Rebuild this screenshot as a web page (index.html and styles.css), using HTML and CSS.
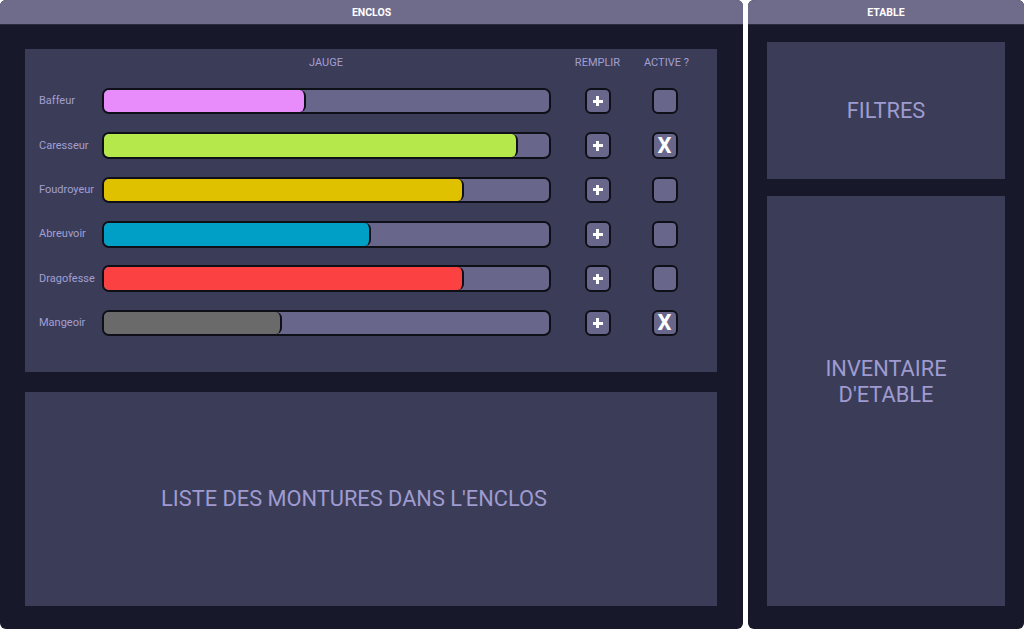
FILE: index.html
```html
<!DOCTYPE html>
<html lang="fr">
<head>
<meta charset="utf-8">
<title>Enclos</title>
<link rel="stylesheet" href="styles.css">
</head>
<body>
<div class="app">
  <section class="panel enclos">
    <header class="panel-head">ENCLOS</header>
    <div class="panel-body enclos-body">
      <div class="box gauges">
        <div class="grid">
          <div class="col-h"></div>
          <div class="col-h">JAUGE</div>
          <div class="col-h">REMPLIR</div>
          <div class="col-h">ACTIVE ?</div>

          <div class="label">Baffeur</div>
          <div class="track"><div class="fill pink" style="width:45.5%"></div></div>
          <div class="cell"><button class="btn"><span class="plus"></span></button></div>
          <div class="cell"><button class="btn"></button></div>

          <div class="label">Caresseur</div>
          <div class="track"><div class="fill lime" style="width:93%"></div></div>
          <div class="cell"><button class="btn"><span class="plus"></span></button></div>
          <div class="cell"><button class="btn x">X</button></div>

          <div class="label">Foudroyeur</div>
          <div class="track"><div class="fill yellow" style="width:81%"></div></div>
          <div class="cell"><button class="btn"><span class="plus"></span></button></div>
          <div class="cell"><button class="btn"></button></div>

          <div class="label">Abreuvoir</div>
          <div class="track"><div class="fill cyan" style="width:60%"></div></div>
          <div class="cell"><button class="btn"><span class="plus"></span></button></div>
          <div class="cell"><button class="btn"></button></div>

          <div class="label">Dragofesse</div>
          <div class="track"><div class="fill red" style="width:81%"></div></div>
          <div class="cell"><button class="btn"><span class="plus"></span></button></div>
          <div class="cell"><button class="btn"></button></div>

          <div class="label">Mangeoir</div>
          <div class="track"><div class="fill grey" style="width:40%"></div></div>
          <div class="cell"><button class="btn"><span class="plus"></span></button></div>
          <div class="cell"><button class="btn x">X</button></div>
        </div>
      </div>
      <div class="box big list">LISTE DES MONTURES DANS L'ENCLOS</div>
    </div>
  </section>
  <section class="panel etable">
    <header class="panel-head">ETABLE</header>
    <div class="panel-body etable-body">
      <div class="box big filtres">FILTRES</div>
      <div class="box big inventaire">INVENTAIRE<br>D'ETABLE</div>
    </div>
  </section>
</div>
</body>
</html>
```

FILE: styles.css
```css
* { box-sizing: border-box; }
html, body { margin: 0; padding: 0; background: #ffffff; }
body { font-family: Roboto, "Noto Sans", "Liberation Sans", sans-serif; }

.app {
  display: grid;
  grid-template-columns: 743px 1fr;
  column-gap: 5px;
  height: 629px;
}

.panel {
  display: flex;
  flex-direction: column;
  background: #171829;
  border-radius: 6px;
  overflow: hidden;
}

.panel-head {
  height: 25px;
  flex: 0 0 25px;
  background: #6f6b8b;
  color: #ffffff;
  font-weight: 700;
  font-size: 10.5px;
  display: flex;
  align-items: center;
  justify-content: center;
  border-bottom: 1px solid #2a2a40;
}

.panel-body {
  flex: 1;
  display: flex;
  flex-direction: column;
}

.enclos-body { padding: 24px 26px 23px 25px; gap: 20px; }
.etable-body { padding: 17px 19px 23px 19px; gap: 17px; }

.box { background: #3b3d58; }

.big {
  display: flex;
  align-items: center;
  justify-content: center;
  text-align: center;
  color: #9f9bd0;
  font-size: 21.8px;
  line-height: 26px;
}

.gauges { height: 323px; flex: 0 0 323px; padding: 7px 0 0 14px; }
.list { flex: 1; padding-right: 34px; }
.filtres { height: 137px; flex: 0 0 137px; }
.inventaire { flex: 1; padding-bottom: 38px; }

.grid {
  display: grid;
  grid-template-columns: 62px 450px 93px 41px;
  grid-template-rows: 14px repeat(6, 26.5px);
  row-gap: 17.9px;
  align-items: center;
}

.col-h {
  text-align: center;
  color: #a29fd2;
  font-size: 11px;
  line-height: 14px;
  white-space: nowrap;
}

.label {
  color: #a29fd2;
  font-size: 11px;
  line-height: 26px;
  white-space: nowrap;
}

.track {
  height: 26.5px;
  background: #69668c;
  border: 2px solid #0f0f17;
  border-radius: 7px;
  overflow: hidden;
  margin-left: 1px;
}
.fill {
  height: 100%;
  border-right: 2px solid #0f0f17;
  border-radius: 0 6px 6px 0;
}
.pink { background: #e78cfa; }
.lime { background: #b5e84a; }
.yellow { background: #e0c100; }
.cyan { background: #00a0c6; }
.red { background: #fb4141; }
.grey { background: #6a6a6a; }

.cell { display: flex; justify-content: center; }

.btn {
  width: 26px;
  height: 26.5px;
  padding: 0;
  background: #69668c;
  border: 2px solid #0f0f17;
  border-radius: 6px;
  display: flex;
  align-items: center;
  justify-content: center;
  color: #ffffff;
  font-family: Roboto, "Liberation Sans", sans-serif;
}
.x { font-size: 22px; font-weight: 700; line-height: 1; }

.plus {
  position: relative;
  width: 10px;
  height: 10px;
}
.plus::before, .plus::after {
  content: "";
  position: absolute;
  background: #ffffff;
}
.plus::before { left: 3.5px; top: 0; width: 3px; height: 10px; }
.plus::after { left: 0; top: 3.5px; width: 10px; height: 3px; }
```
